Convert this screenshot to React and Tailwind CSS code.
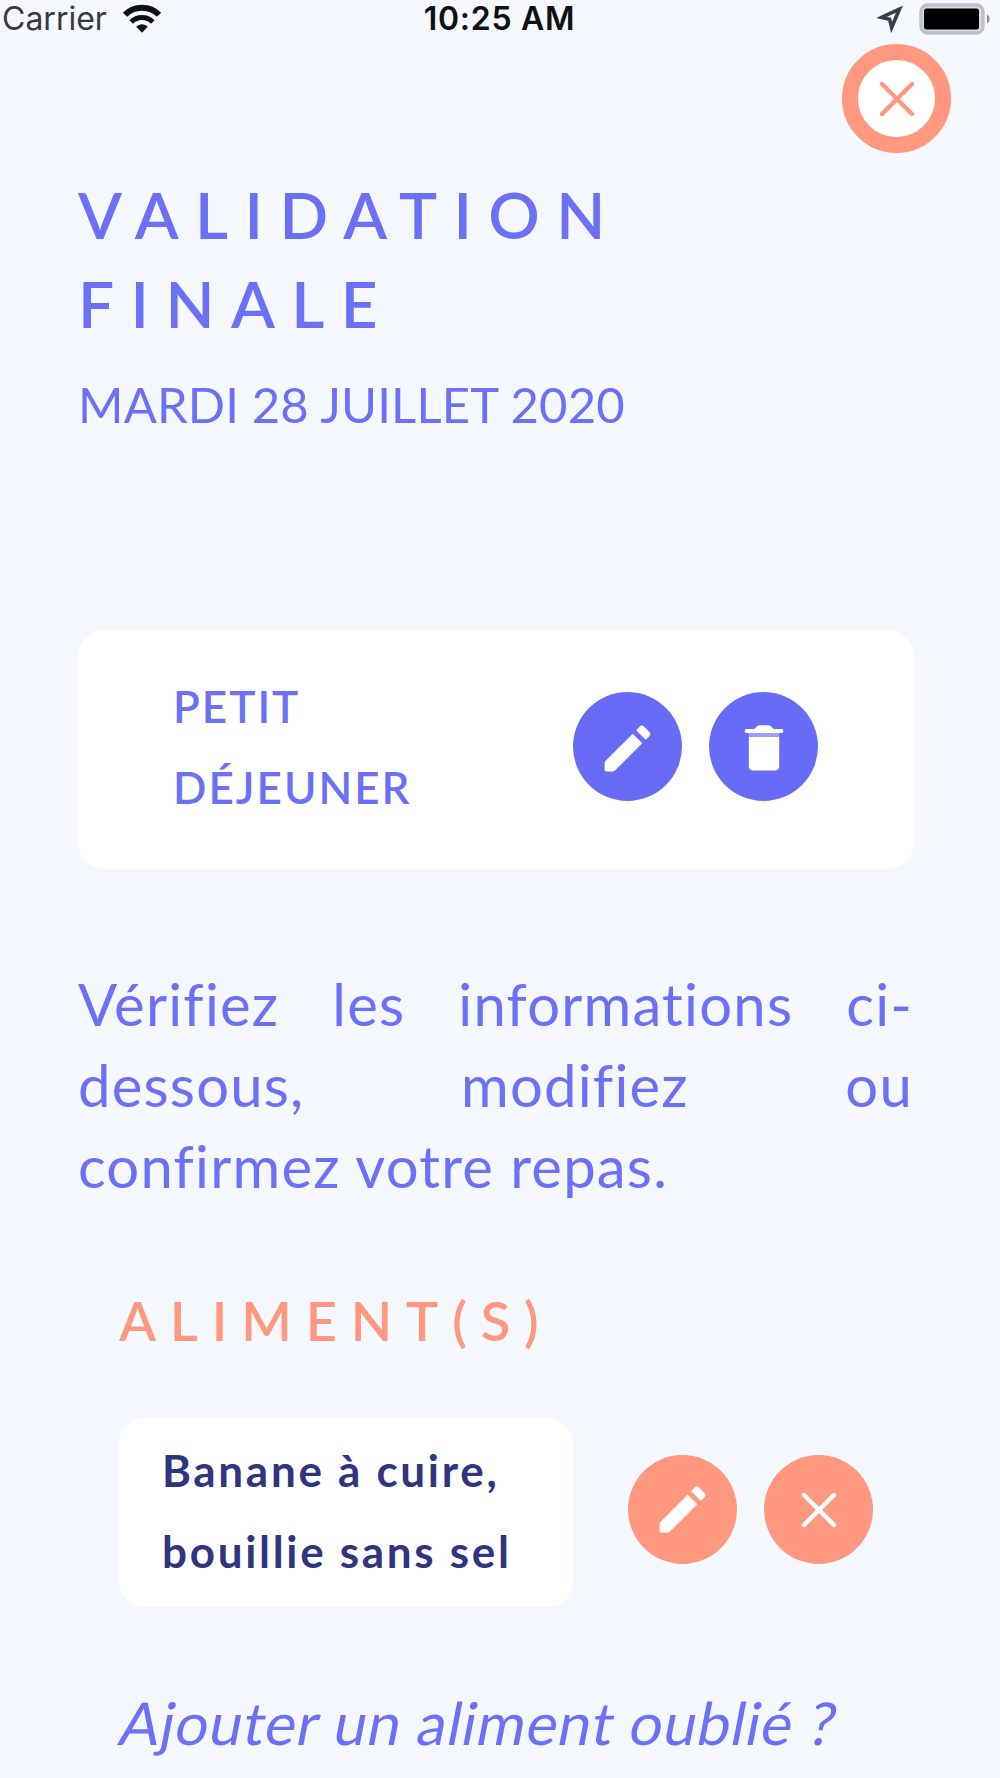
function WifiIcon() {
  return (
    <svg width="40" height="30" viewBox="0 0 40 30" fill="none" stroke="#111" aria-hidden="true">
      <path d="M3 10.8C12 1.4 28 1.4 37 10.8" strokeWidth="6" />
      <path d="M9.2 18C15.2 12 24.8 12 30.8 18" strokeWidth="5.2" />
      <path d="M20 28.8L14.2 22.8C17.4 19.4 22.6 19.4 25.8 22.8Z" fill="#111" stroke="none" />
    </svg>
  );
}

function LocationIcon() {
  return (
    <svg width="26" height="28" viewBox="0 0 26 28" aria-hidden="true">
      <path
        d="M22.4 4.2L4.5 12.4L12.6 14.2L14.6 22.6Z"
        fill="none"
        stroke="#3a3d42"
        strokeWidth="3.6"
        strokeLinejoin="miter"
      />
    </svg>
  );
}

function BatteryIcon() {
  return (
    <svg width="73" height="32" viewBox="0 0 73 32" aria-hidden="true">
      <rect x="2" y="2" width="62" height="28" rx="6.5" fill="#d9dbe3" stroke="#bfc1c9" strokeWidth="3.4" />
      <rect x="5" y="5.5" width="55" height="21" rx="2.5" fill="#000" />
      <path d="M68 11.5C71.5 12.5 71.5 19.5 68 20.5Z" fill="#8f9199" />
    </svg>
  );
}

function PencilIcon() {
  return (
    <svg width="61" height="61" viewBox="0 0 24 24" fill="currentColor" aria-hidden="true">
      <path d="M20.71 7.04C21.1 6.65 21.1 6 20.71 5.63L18.37 3.29C18 2.9 17.35 2.9 16.96 3.29L15.4 4.85L19.15 8.6ZM3.3 16.95C3.1 17.15 3 17.4 3 17.7V20.6C3 20.85 3.15 21 3.4 21H6.3C6.6 21 6.85 20.9 7.05 20.7L17.81 9.93L14.06 6.18Z" />
    </svg>
  );
}

function TrashIcon() {
  return (
    <svg width="40" height="46" viewBox="0 0 40 46" fill="currentColor" aria-hidden="true">
      <path d="M10.5 4L13 1.2C13.6 0.5 14.4 0.2 15.4 0.2H24.6C25.6 0.2 26.4 0.5 27 1.2L29.5 4H37.5C38.6 4 39.4 4.8 39.4 6C39.4 7.2 38.6 8 37.5 8H2.5C1.4 8 0.6 7.2 0.6 6C0.6 4.8 1.4 4 2.5 4Z" />
      <rect x="4.8" y="8" width="30.4" height="4" opacity="0.35" />
      <path d="M4.8 12H35.2V41.2C35.2 43.9 33.6 45.6 30.8 45.6H9.2C6.4 45.6 4.8 43.9 4.8 41.2Z" />
    </svg>
  );
}

function CloseIcon() {
  return (
    <svg
      width="36"
      height="36"
      viewBox="0 0 36 36"
      fill="none"
      stroke="currentColor"
      strokeWidth="4.4"
      strokeLinecap="round"
      aria-hidden="true"
    >
      <path d="M3 3L33 33M33 3L3 33" />
    </svg>
  );
}

function RoundButton({ label, className, children }) {
  return (
    <button
      type="button"
      aria-label={label}
      className={`flex size-[109px] shrink-0 items-center justify-center rounded-full text-white ${className}`}
    >
      {children}
    </button>
  );
}

function StatusBar() {
  return (
    <div className="grid h-[38px] grid-cols-3 pl-0.5 pr-[8px] font-['Inter',sans-serif] text-[32px] leading-[38px] text-[#111]">
      <div className="flex items-center gap-[15px]">
        <span className="text-[#3a3a3c]">Carrier</span>
        <WifiIcon />
      </div>
      <span className="pl-[5px] text-center font-semibold tracking-[0.7px]">10:25 AM</span>
      <div className="flex items-center justify-end gap-[16px]">
        <LocationIcon />
        <BatteryIcon />
      </div>
    </div>
  );
}

export default function App() {
  return (
    <div className="h-[1778px] w-[1000px] overflow-hidden bg-[#f5f8ff] font-['Lato',sans-serif] text-[#6c70f6]">
      <StatusBar />

      <div className="flex justify-end pr-[49px] pt-[6px]">
        <button
          type="button"
          aria-label="Fermer"
          className="flex size-[109px] items-center justify-center rounded-full border-[16px] border-[#ff987f] bg-white text-[#ff987f]"
        >
          <CloseIcon />
        </button>
      </div>

      <main className="pl-[78px] pr-[86px] pt-[17px]">
        <h1 className="text-[64px] font-semibold leading-[89px] tracking-[16.4px]">
          VALIDATION
          <br />
          FINALE
        </h1>
        <p className="mt-[26px] text-[49px] leading-[60px] tracking-[0.15px]">MARDI 28 JUILLET 2020</p>

        <section className="mt-[196px] flex h-[239px] items-center rounded-[26px] bg-white pb-[7px] pl-[95px] pr-[96px]">
          <h2 className="flex-1 pt-px text-[44px] font-semibold leading-[81px] tracking-[2px]">
            PETIT
            <br />
            DÉJEUNER
          </h2>
          <div className="flex gap-[27px]">
            <RoundButton label="Modifier le repas" className="bg-[#676bf5] pt-[4px]">
              <PencilIcon />
            </RoundButton>
            <RoundButton label="Supprimer le repas" className="bg-[#676bf5] pt-[4px]">
              <TrashIcon />
            </RoundButton>
          </div>
        </section>

        <p className="mt-[94px] pr-px text-justify text-[58px] leading-[81px] tracking-[1.2px]">
          Vérifiez les informations ci-dessous, modifiez ou confirmez&nbsp;votre&nbsp;repas.
        </p>

        <section className="pl-[41px] pt-[79px]">
          <h2 className="text-[54px] font-semibold leading-[72px] tracking-[13.9px] text-[#ff987f]">ALIMENT(S)</h2>

          <div className="mt-[61px] flex">
            <div className="h-[189px] w-[454px] rounded-[26px] bg-white pl-[43px] pt-[12px] text-[44px] font-bold leading-[81px] tracking-[2.7px] text-[#31347f]">
              Banane à cuire,
              <br />
              bouillie sans sel
            </div>
            <div className="ml-[55px] flex items-center gap-[27px] pb-[6px]">
              <RoundButton label="Modifier l'aliment" className="bg-[#ff987f]">
                <PencilIcon />
              </RoundButton>
              <RoundButton label="Retirer l'aliment" className="bg-[#ff987f]">
                <CloseIcon />
              </RoundButton>
            </div>
          </div>

          <a className="ml-[2px] mt-[76px] block origin-left -skew-x-[11deg] whitespace-nowrap text-[59px] leading-[80px] tracking-[0.8px]">
            Ajouter un aliment oublié ?
          </a>
        </section>
      </main>
    </div>
  );
}
